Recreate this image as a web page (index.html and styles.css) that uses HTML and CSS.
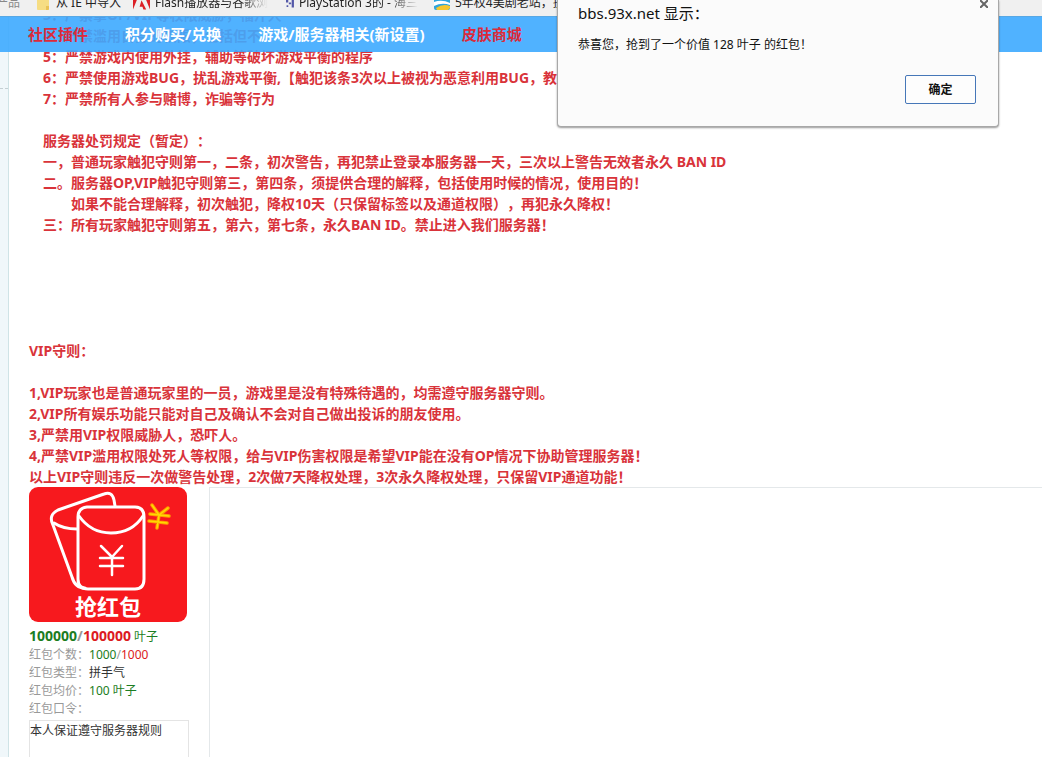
FILE: index.html
```html
<!DOCTYPE html>
<html lang="zh-CN">
<head>
<meta charset="utf-8">
<title>bbs.93x.net</title>
<link rel="stylesheet" href="styles.css">
</head>
<body>
<header class="bookmarks">
  <a class="bookmark bookmark-first" href="#"><span>产品</span></a>
  <a class="bookmark bookmark-folder" href="#">
    <svg width="13" height="16" viewBox="0 0 13 16"><path d="M1 3h11v11q0 1-1 1H1q-1 0-1-1V4q0-1 1-1z" fill="#f6dd83"/><path d="M9 11h3v3q0 1-1 1H9z" fill="#eac255"/></svg>
    <span>从 IE 中导入</span>
  </a>
  <a class="bookmark bookmark-flash" href="#">
    <svg width="17" height="16" viewBox="0 0 18 16"><path d="M0 15V0h6zM18 15V0h-6zM9 5l5 10h-3l-1-3H7z" fill="#dc1f26"/></svg>
    <span class="fade">Flash播放器与谷歌浏</span>
  </a>
  <a class="bookmark bookmark-game" href="#">
    <svg width="14" height="16" viewBox="0 0 14 16"><path d="M10 0h4v16h-4zM0 2h4v5H0zM1 12h3v3H1zM5 7h4v3H5z" fill="#5459a8"/></svg>
    <span class="fade">PlayStation 3的 - 海三</span>
  </a>
  <a class="bookmark bookmark-drama" href="#">
    <svg width="16" height="16" viewBox="0 0 16 16"><path d="M0 3h16v10q0 2-2 2H2q-2 0-2-2z" fill="#2fa5dc"/><path d="M0 7q8-3 16 1v2q-8-3-16 1z" fill="#fff"/><path d="M2 13q7-5 14-2v2l-2 2H3z" fill="#f6c62d"/></svg>
    <span>5年权4美剧老站，挂</span>
  </a>
</header>

<div class="viewport">
  <nav class="site-nav">
    <a class="nav-link hot" href="#">社区插件</a>
    <a class="nav-link" href="#">积分购买/兑换</a>
    <a class="nav-link" href="#">游戏/服务器相关(新设置)</a>
    <a class="nav-link hot" href="#">皮肤商城</a>
  </nav>

  <div class="page">
    <aside class="gutter"></aside>
    <main class="post">
      <section class="rules server-rules">
        <p>3：严禁拿OP/VIP等权限威胁，福汗人</p>
        <p>4：严禁滥用自身的权限，包括但不</p>
        <p>5：严禁游戏内使用外挂，辅助等破坏游戏平衡的程序</p>
        <p>6：严禁使用游戏BUG，扰乱游戏平衡,【触犯该条3次以上被视为恶意利用BUG，教</p>
        <p>7：严禁所有人参与赌博，诈骗等行为</p>
      </section>
      <section class="rules server-rules penalties">
        <p>服务器处罚规定（暂定）：</p>
        <p>一，普通玩家触犯守则第一，二条，初次警告，再犯禁止登录本服务器一天，三次以上警告无效者永久 BAN ID</p>
        <p>二。服务器OP,VIP触犯守则第三，第四条，须提供合理的解释，包括使用时候的情况，使用目的！</p>
        <p class="continued">如果不能合理解释，初次触犯，降权10天（只保留标签以及通道权限），再犯永久降权！</p>
        <p>三：所有玩家触犯守则第五，第六，第七条，永久BAN ID。禁止进入我们服务器！</p>
      </section>
      <section class="rules vip-rules">
        <p class="rules-title">VIP守则：</p>
        <p>1,VIP玩家也是普通玩家里的一员，游戏里是没有特殊待遇的，均需遵守服务器守则。</p>
        <p>2,VIP所有娱乐功能只能对自己及确认不会对自己做出投诉的朋友使用。</p>
        <p>3,严禁用VIP权限威胁人，恐吓人。</p>
        <p>4,严禁VIP滥用权限处死人等权限，给与VIP伤害权限是希望VIP能在没有OP情况下协助管理服务器！</p>
        <p>以上VIP守则违反一次做警告处理，2次做7天降权处理，3次永久降权处理，只保留VIP通道功能！</p>
      </section>

      <div class="packet">
        <div class="packet-info">
          <button class="grab" type="button">
            <svg class="grab-art" viewBox="0 0 158 107" fill="none" stroke-linecap="round" stroke-linejoin="round">
              <g stroke="#fff" stroke-width="3">
                <path d="M58 20Q49 21 49 30V92Q49 102 59 102H106Q115 102 115 92V30Q115 20 106 20H58"/>
                <path d="M50 29Q62 46 82 46Q103 46 114 29"/>
                <path d="M56 101Q46 101 43 90L24 38Q19 28 29 23L75 7Q83 4 85 13L86 19"/>
                <path d="M25 36Q34 42 48 42"/>
                <path d="M72 59L83 70L93 59M83 70V88M71 71H94M71 79H94" stroke-width="2.5"/>
              </g>
              <g stroke="#ff9a00" stroke-width="3.5">
                <path d="M123 18L130 28L139 21M130 28L128 41M121 27L140 29M120 34L138 36"/>
              </g>
              <g stroke="#ffd900" stroke-width="1.5">
                <path d="M123 18L130 28L139 21M130 28L128 41M121 27L140 29M120 34L138 36"/>
              </g>
            </svg>
            <span class="grab-label">抢红包</span>
          </button>
          <p class="amount"><b class="left">100000</b><b>/</b><b class="total">100000</b> <span class="left">叶子</span></p>
          <p>红包个数：<span class="left">1000</span>/<span class="total">1000</span></p>
          <p>红包类型：<span class="kind">拼手气</span></p>
          <p>红包均价：<span class="left">100 叶子</span></p>
          <p><label for="phrase">红包口令：</label></p>
          <textarea class="phrase" id="phrase">本人保证遵守服务器规则</textarea>
        </div>
        <div class="packet-log"></div>
      </div>
    </main>
  </div>
</div>

<div class="dialog" role="alertdialog" aria-labelledby="dialog-title">
  <button class="dialog-close" type="button" aria-label="关闭">
    <svg width="8" height="8" viewBox="0 0 8 8"><path d="M0 0l8 8M8 0L0 8" stroke="#666" stroke-width="2"/></svg>
  </button>
  <h1 class="dialog-title" id="dialog-title">bbs.93x.net 显示：</h1>
  <p class="dialog-text">恭喜您，抢到了一个价值 128 叶子 的红包！</p>
  <div class="dialog-actions"><button class="confirm" type="button">确定</button></div>
</div>
</body>
</html>
```
FILE: styles.css
```css
* {
  box-sizing: border-box;
}

body {
  margin: 0;
  height: 100vh;
  overflow: hidden;
  position: relative;
  display: flex;
  flex-direction: column;
  background: #fff;
  font-family: "Noto Sans", "Noto Sans CJK SC", sans-serif;
  font-size: 12px;
  text-spacing-trim: space-all;
}

p,
h1 {
  margin: 0;
}

button,
textarea {
  font: inherit;
}

a {
  text-decoration: none;
}

/* Bookmarks strip */
.bookmarks {
  display: flex;
  flex: none;
  margin-top: -7px;
  padding-bottom: 3px;
  background: #f0f0f0;
  white-space: nowrap;
}

.bookmark {
  display: flex;
  flex: none;
  align-items: center;
  gap: 5px;
  line-height: 20px;
  color: #222;
  overflow: hidden;
}

.bookmark-first {
  width: 37px;
  margin-left: -4px;
  margin-right: 4px;
  color: #888;
}

.bookmark-folder {
  width: 96px;
  gap: 6px;
}

.bookmark-flash {
  width: 137px;
  margin-right: 16px;
}

.bookmark-game {
  width: 132px;
  margin-right: 16px;
}

.fade {
  -webkit-mask-image: linear-gradient(to right, #000 75%, transparent);
  mask-image: linear-gradient(to right, #000 75%, transparent);
}

/* Site */
.viewport {
  position: relative;
  flex: 1;
  overflow: hidden;
}

.site-nav {
  position: absolute;
  top: 0;
  left: 0;
  right: 0;
  z-index: 1;
  display: flex;
  gap: 37px;
  padding: 0 28px;
  background: rgba(61, 170, 255, 0.9);
  border-top: 1px solid #58a8e4;
}

.nav-link {
  color: #fff;
  font-size: 15px;
  font-weight: bold;
  line-height: 35px;
  white-space: nowrap;
}

.nav-link.hot {
  color: #dc2a3a;
}

.page {
  display: flex;
  height: 100%;
}

.gutter {
  flex: none;
  width: 9px;
  padding-top: 72px;
  background: #f0f7fa;
  border-right: 1px solid #cfe3e6;
}

.gutter::before {
  content: "";
  display: block;
  border-top: 1px dashed #c4cfd3;
}

.post {
  flex: 1;
  min-width: 0;
  display: flex;
  flex-direction: column;
  margin-top: -12px;
  padding-left: 20px;
}

.rules {
  flex: none;
  color: #d9333a;
  font-size: 14px;
  font-weight: bold;
  line-height: 21px;
  white-space: nowrap;
}

.server-rules {
  padding-left: 14px;
}

.penalties {
  margin-top: 21px;
}

.continued {
  padding-left: 28px;
}

.vip-rules {
  margin-top: 105px;
}

.rules-title {
  margin-bottom: 21px;
}

/* Red packet */
.packet {
  flex: 1;
  display: flex;
  min-height: 0;
}

.packet-info {
  flex: none;
  width: 180px;
  color: #999;
  line-height: 18px;
}

.packet-log {
  flex: 1;
  border-top: 1px solid #e4e8ea;
  border-left: 1px solid #e4e8ea;
}

.grab {
  display: block;
  width: 158px;
  margin-bottom: 5px;
  padding: 0 0 4px;
  border: 0;
  border-radius: 9px;
  background: #f7191e;
  color: #fff;
}

.grab-art {
  display: block;
  width: 100%;
}

.grab-label {
  display: block;
  font-size: 22px;
  font-weight: bold;
  line-height: 24px;
}

.amount b {
  font-size: 14px;
}

.left {
  color: #1c7d22;
}

.total {
  color: #dc1a22;
}

.kind {
  color: #333;
}

.phrase {
  display: block;
  width: 160px;
  height: 60px;
  margin-top: 2px;
  padding: 1px 0;
  border: 1px solid #e4e4e4;
  color: #333;
  line-height: 18px;
  resize: none;
  overflow: hidden;
}

/* Alert */
.dialog {
  position: absolute;
  top: 0;
  right: 43px;
  z-index: 2;
  width: 442px;
  padding: 3px 22px 22px 20px;
  background: #fbfbfb;
  border: 1px solid #a8a8a8;
  border-top: 0;
  border-radius: 0 0 4px 4px;
  box-shadow: 0 1px 2px rgba(0, 0, 0, 0.4);
  color: #111;
}

.dialog-close {
  position: absolute;
  top: 0;
  right: 10px;
  display: block;
  padding: 0;
  border: 0;
  background: none;
  line-height: 8px;
}

.dialog-title {
  font-size: 15px;
  font-weight: normal;
  line-height: 20px;
}

.dialog-text {
  margin-top: 12px;
  line-height: 20px;
}

.dialog-actions {
  display: flex;
  justify-content: flex-end;
  margin-top: 20px;
}

.confirm {
  width: 71px;
  padding: 0;
  border: 1px solid #4677b8;
  border-radius: 2px;
  background: #fdfdfd;
  color: #111;
  font-weight: bold;
  line-height: 27px;
}
```
